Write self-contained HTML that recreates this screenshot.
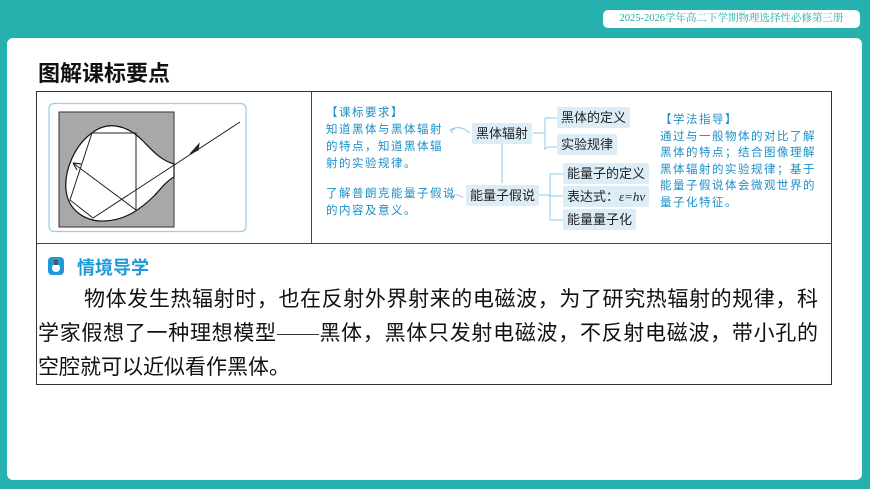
<!DOCTYPE html>
<html><head><meta charset="utf-8"><style>
*{margin:0;padding:0;box-sizing:border-box}
body{width:870px;height:489px;background:#26b0ae;position:relative;overflow:hidden;font-family:"Liberation Sans","Noto Sans CJK SC",sans-serif}
.pill{position:absolute;left:603px;top:10px;width:257px;height:18px;background:#fff;border-radius:5px;color:#26a8a6;font-size:10.5px;line-height:18px;text-align:center;font-family:"Liberation Serif","Noto Serif CJK SC",serif}
.card{position:absolute;left:7px;top:38px;width:855px;height:442px;background:#fff;border-radius:6px}
.title{position:absolute;left:38px;top:56px;font-size:22px;font-weight:bold;color:#111}
.tbl{position:absolute;left:36px;top:91px;width:796px;height:294px;border:1.3px solid #333}
.hl{position:absolute;left:0;top:151px;width:100%;border-top:1.3px solid #444}
.vl{position:absolute;left:274px;top:0;height:151px;border-left:1.3px solid #444}
.hw{position:absolute;color:#1b8fc8;font-size:11.5px;line-height:17px;letter-spacing:1.5px;font-family:"Liberation Sans","WenQuanYi Zen Hei",sans-serif}
.bx{position:absolute;background:#dcedf8;color:#222;font-size:13px;line-height:21px;padding:0 4px;border-radius:2px;white-space:nowrap}
.body{position:absolute;left:38px;font-size:21px;color:#111;width:780px;text-align:justify;text-align-last:justify}
</style></head><body>
<div class="pill">2025-2026学年高二下学期物理选择性必修第三册</div>
<div class="card"></div>
<div class="title">图解课标要点</div>
<div class="tbl">
 <div class="vl"></div><div class="hl"></div>
</div>
<svg style="position:absolute;left:0;top:0" width="870" height="489">
 <rect x="49" y="103.5" width="197" height="128" rx="5" fill="none" stroke="#8fd0ea" stroke-width="1.2"/>
 <rect x="59" y="112" width="115" height="115" fill="#a8a8a8" stroke="#333"/>
 <path d="M174,164 C160,160 152,150 142,140 C128,126 108,120 92,133 C75,145 64,170 66,190 C68,210 85,222 105,221 C125,220 140,210 155,195 C162,187 168,180 174,177 Z" fill="#fff" stroke="#111" stroke-width="1.2"/>
 <polyline points="240,122 93,218 70,200 92,133 136,133 136,210 73,163" fill="none" stroke="#222" stroke-width="1"/>
 <path d="M73,163 L81,164 M73,163 L77,170" stroke="#222" stroke-width="1.2" fill="none"/>
 <path d="M190,154 L199,144 L198,150 Z" fill="#222" stroke="#222"/>
 <g stroke="#8ecbe6" stroke-width="1" fill="none">
  <path d="M533,133 H545 M545,118 V150 Q545,147 550,147 H557 M545,118 H557"/>
  <path d="M502,143 V183"/>
  <path d="M538,195 H550 M550,174 V220 M550,174 H563 M550,196 H563 M550,220 H563"/>
  <path d="M470,133 C462,126 455,127 450,130 M450,130 l5,-1 M450,130 l3,3"/>
  <path d="M463,198 C458,193 452,195 450,197 M450,197 l5,-1 M450,197 l3,3"/>
 </g>
</svg>
<div class="hw" style="left:326px;top:105px">【课标要求】<br>知道黑体与黑体辐射<br>的特点，知道黑体辐<br>射的实验规律。</div>
<div class="hw" style="left:326px;top:186px">了解普朗克能量子假说<br>的内容及意义。</div>
<div class="hw" style="left:660px;top:112px;line-height:16.5px">【学法指导】<br>通过与一般物体的对比了解<br>黑体的特点；结合图像理解<br>黑体辐射的实验规律；基于<br>能量子假说体会微观世界的<br>量子化特征。</div>
<div class="bx" style="left:472px;top:123px">黑体辐射</div>
<div class="bx" style="left:466px;top:185px">能量子假说</div>
<div class="bx" style="left:557px;top:107px">黑体的定义</div>
<div class="bx" style="left:557px;top:134px">实验规律</div>
<div class="bx" style="left:563px;top:163px">能量子的定义</div>
<div class="bx" style="left:563px;top:186px">表达式：<i style="font-family:'Liberation Serif',serif">ε=hν</i></div>
<div class="bx" style="left:563px;top:209px">能量量子化</div>
<svg style="position:absolute;left:48px;top:257px" width="16" height="18"><rect x="0" y="0" width="16" height="18" rx="4" fill="#1e9ad8"/><circle cx="8" cy="11" r="4" fill="#fff"/><rect x="6" y="3" width="4" height="5" fill="#555"/></svg>
<div style="position:absolute;left:77px;top:254px;font-size:18px;font-weight:bold;color:#1e9ad8">情境导学</div>
<div class="body" style="top:283px;padding-left:46px">物体发生热辐射时，也在反射外界射来的电磁波，为了研究热辐射的规律，科</div>
<div class="body" style="top:317px">学家假想了一种理想模型<span style="display:inline-block;width:42px;border-top:1px solid #333;vertical-align:middle"></span>黑体，黑体只发射电磁波，不反射电磁波，带小孔的</div>
<div class="body" style="top:351px;text-align:left;text-align-last:left">空腔就可以近似看作黑体。</div>
</body></html>
